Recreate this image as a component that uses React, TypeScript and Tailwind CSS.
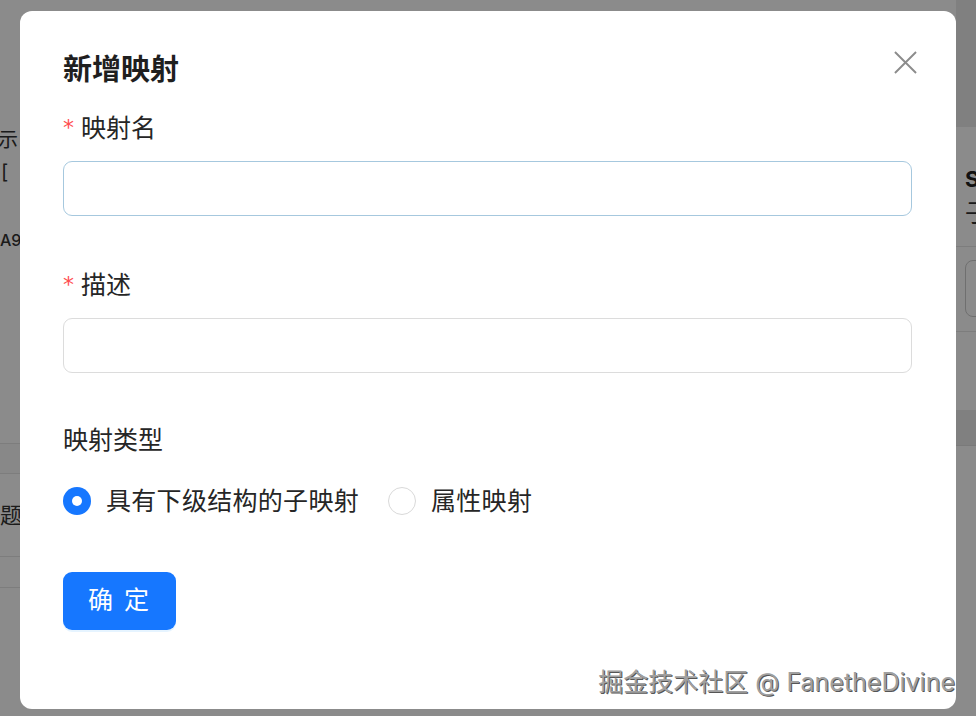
import { useState } from "react";

const font = "font-['Inter','Noto_Sans_CJK_SC',sans-serif]";

const Label = ({ text, required }: { text: string; required?: boolean }) => (
  <div className="flex items-center h-[36px] text-[25px] leading-[36px] text-[#262626]">
    {required && (
      <span className="text-[#ff4d4f] text-[22px] mr-[7px] font-['DejaVu_Sans',sans-serif] leading-none">
        *
      </span>
    )}
    <span>{text}</span>
  </div>
);

const Radio = ({
  checked,
  label,
  onClick,
}: {
  checked: boolean;
  label: string;
  onClick: () => void;
}) => (
  <button className="flex items-center gap-[15px]" onClick={onClick}>
    {checked ? (
      <span className="w-[28px] h-[28px] rounded-full bg-[#1677ff] flex items-center justify-center">
        <span className="w-[10px] h-[10px] rounded-full bg-white" />
      </span>
    ) : (
      <span className="w-[28px] h-[28px] rounded-full border border-[#d9d9d9] bg-white" />
    )}
    <span className="text-[25px] leading-[36px] text-[#262626] tracking-[0.3px]">{label}</span>
  </button>
);

export default function App() {
  const [kind, setKind] = useState("child");
  return (
    <div className={`${font} relative w-[976px] h-[716px] overflow-hidden bg-white`}>
      {/* page behind the dialog */}
      <div className="flex h-full">
        <div className="w-[20px] overflow-hidden bg-white text-[#333]">
          <div className="h-[126px]" />
          <div className="-ml-[22px] whitespace-nowrap text-[20px] leading-[28px]">提示</div>
          <div className="text-[20px] leading-[28px] pl-[1px] mt-[4px]">[</div>
          <div className="text-[16px] leading-[24px] mt-[42px] font-medium">A9</div>
          <div className="h-[191px]" />
          <div className="border-t border-[#e5e5e5] h-[30px] bg-[#fafafa]" />
          <div className="border-t border-[#e5e5e5] h-[83px] flex items-center">
            <span className="-ml-[22px] whitespace-nowrap text-[22px]">标题</span>
          </div>
          <div className="border-t border-[#e5e5e5] h-[31px]" />
          <div className="border-t border-[#e5e5e5]" />
        </div>
        <div className="flex-1" />
        <div className="w-[20px] overflow-hidden bg-[#ebebeb]">
          <div className="h-[127px]" />
          <div className="h-[283px] bg-white pl-[9px] text-[#222]">
            <div className="pt-[37px] text-[22px] leading-[30px] font-bold">S</div>
            <div className="mt-[4px] text-[25px] leading-[30px] text-[#333] whitespace-nowrap">子映射</div>
            <div className="mt-[18px] border-t border-[#e5e5e5] -ml-[9px]" />
            <div className="mt-[13px] h-[57px] w-[40px] rounded-lg border border-[#ccc]" />
            <div className="mt-[14px] border-t border-[#e5e5e5] -ml-[9px]" />
          </div>
          <div className="h-[35px]" />
          <div className="h-full bg-white border-t border-[#e0e0e0]" />
        </div>
      </div>

      {/* mask + dialog */}
      <div className="absolute inset-0 bg-black/[0.455] flex justify-center pt-[11px]">
        <div className="relative w-[936px] h-[698px] rounded-[12px] bg-white overflow-hidden pl-[43px] pr-[44px] pt-[39px]">
          <button className="absolute right-[39px] top-[40px] w-[23px] h-[23px] text-[#8c8c8c]">
            <svg viewBox="0 0 24 24" className="w-full h-full" fill="none" stroke="currentColor" strokeWidth="2">
              <path d="M1 1L23 23M23 1L1 23" />
            </svg>
          </button>

          <div className="text-[29px] leading-[40px] font-bold text-[#1f1f1f]">新增映射</div>

          <div className="mt-[20px]">
            <Label text="映射名" required />
            <input className="mt-[15px] w-full h-[55px] rounded-[9px] border border-[#a6c8de] outline-none px-4 text-[22px]" />
          </div>

          <div className="mt-[51px]">
            <Label text="描述" required />
            <input className="mt-[15px] w-full h-[55px] rounded-[9px] border border-[#dcdcdc] outline-none px-4 text-[22px]" />
          </div>

          <div className="mt-[49px]">
            <Label text="映射类型" />
            <div className="mt-[25px] flex items-center gap-[29px]">
              <Radio checked={kind === "child"} label="具有下级结构的子映射" onClick={() => setKind("child")} />
              <Radio checked={kind === "attr"} label="属性映射" onClick={() => setKind("attr")} />
            </div>
          </div>

          <button className="mt-[53px] w-[113px] h-[58px] rounded-[9px] bg-[#1677ff] text-white text-[25px] tracking-[2px] shadow-[0_2px_0_rgba(5,145,255,0.1)]">
            确 定
          </button>

          <div className="absolute right-[1px] bottom-[10px] text-[25px] leading-[34px] text-[#a0a0a0] whitespace-nowrap [text-shadow:1px_1px_0_#555,-1px_-1px_0_#fff]">
            掘金技术社区 @ FanetheDivine
          </div>
        </div>
      </div>
    </div>
  );
}
